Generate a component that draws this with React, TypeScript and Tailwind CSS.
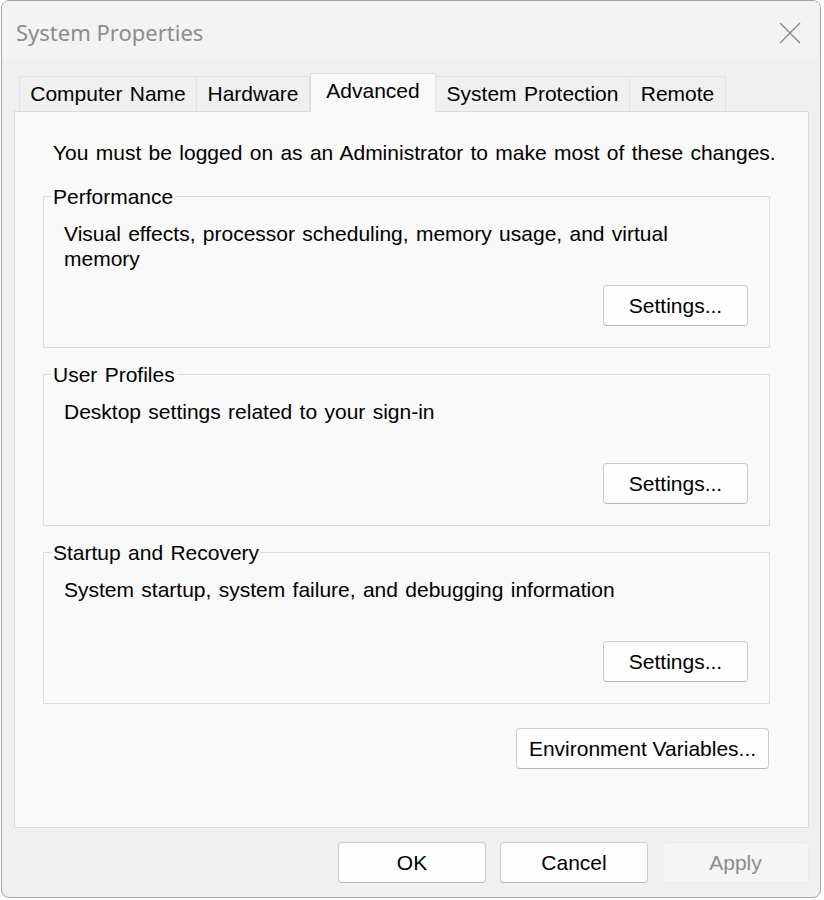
const tabs = [
  { label: "Computer Name", w: "w-[178px]" },
  { label: "Hardware", w: "w-[114px]" },
  { label: "Advanced", w: "w-[126px]", active: true },
  { label: "System Protection", w: "w-[195px]" },
  { label: "Remote", w: "w-[97px]" },
];

const groups = [
  {
    title: "Performance",
    text: "Visual effects, processor scheduling, memory usage, and virtual memory",
  },
  { title: "User Profiles", text: "Desktop settings related to your sign-in" },
  {
    title: "Startup and Recovery",
    text: "System startup, system failure, and debugging information",
  },
];

const Button = ({ children, className = "", disabled = false }: { children: React.ReactNode; className?: string; disabled?: boolean }) => (
  <button
    type="button"
    disabled={disabled}
    className={`h-[41px] rounded-[4px] border text-[21px] leading-none ${
      disabled
        ? "border-[#ececec] bg-[#f5f5f5] text-[#8c8c8c]"
        : "border-[#cccccc] border-b-[#b8b8b8] bg-[#fdfdfd] text-black"
    } ${className}`}
  >
    {children}
  </button>
);

export default function App() {
  return (
    <div
      className="w-[824px] h-[900px] bg-white [word-spacing:1.5px]"
      style={{ fontFamily: '"Liberation Sans", Arial, sans-serif' }}
    >
      <div className="ml-px w-[820px] h-[898px] rounded-[8px] border border-[#a3a3a3] bg-[#f0f0f0] overflow-hidden flex flex-col">
        {/* title bar */}
        <div className="h-[57px] shrink-0 bg-[#f3f3f3] flex items-center justify-between pl-[14px] pr-[19px]">
          <span
            className="text-[22px] text-[#8c8c8c] pt-[6px] [word-spacing:0px]"
            style={{ fontFamily: '"Noto Sans", "Open Sans", sans-serif' }}
          >
            System Properties
          </span>
          <svg width="22" height="22" viewBox="0 0 22 22" className="mt-[6px]">
            <path d="M1 1 L21 21 M21 1 L1 21" stroke="#8a8a8a" strokeWidth="1.4" fill="none" />
          </svg>
        </div>

        <div className="pl-[12px] pr-[11px] flex flex-col">
          {/* tabs */}
          <div className="flex items-end pl-[5px] mt-[15px] h-[38px] relative z-10">
            {tabs.map((t) =>
              t.active ? (
                <div
                  key={t.label}
                  className={`${t.w} h-[39px] -mb-px border border-b-0 border-[#dedede] bg-[#f9f9f9] flex items-center justify-center pb-[4px] text-[21px] text-black`}
                >
                  {t.label}
                </div>
              ) : (
                <div
                  key={t.label}
                  className={`${t.w} h-[35px] border border-b-0 border-[#e3e3e3] -ml-px first:ml-0 bg-[#f0f0f0] flex items-center justify-center text-[21px] text-black`}
                >
                  {t.label}
                </div>
              )
            )}
          </div>

          {/* panel */}
          <div className="h-[717px] border border-[#dcdcdc] bg-[#f9f9f9] pl-[28px] pr-[38px] pt-[28px] flex flex-col">
            <p className="text-[21px] leading-[25px] text-black pl-[10px] whitespace-nowrap">
              You must be logged on as an Administrator to make most of these changes.
            </p>
            <div className="flex flex-col gap-[14px] mt-[19px]">
              {groups.map((g) => (
                <fieldset key={g.title} className="border border-[#dcdcdc]">
                  <legend className="ml-[7px] px-[2px] text-[21px] leading-[25px] text-black">{g.title}</legend>
                  <div className="h-[138px] pt-[12px] pb-[21px] pl-[20px] pr-[21px] flex flex-col">
                    <p className="text-[21px] leading-[25px] text-black">{g.text}</p>
                    <Button className="w-[145px] mt-auto self-end">Settings...</Button>
                  </div>
                </fieldset>
              ))}
            </div>
            <div className="flex justify-end mt-[24px] pr-px">
              <Button className="w-[253px]">Environment Variables...</Button>
            </div>
          </div>

          {/* footer */}
          <div className="flex justify-end gap-[14px] pt-[14px]">
            <Button className="w-[148px]">OK</Button>
            <Button className="w-[148px]">Cancel</Button>
            <Button className="w-[147px]" disabled>
              Apply
            </Button>
          </div>
        </div>
      </div>
    </div>
  );
}
